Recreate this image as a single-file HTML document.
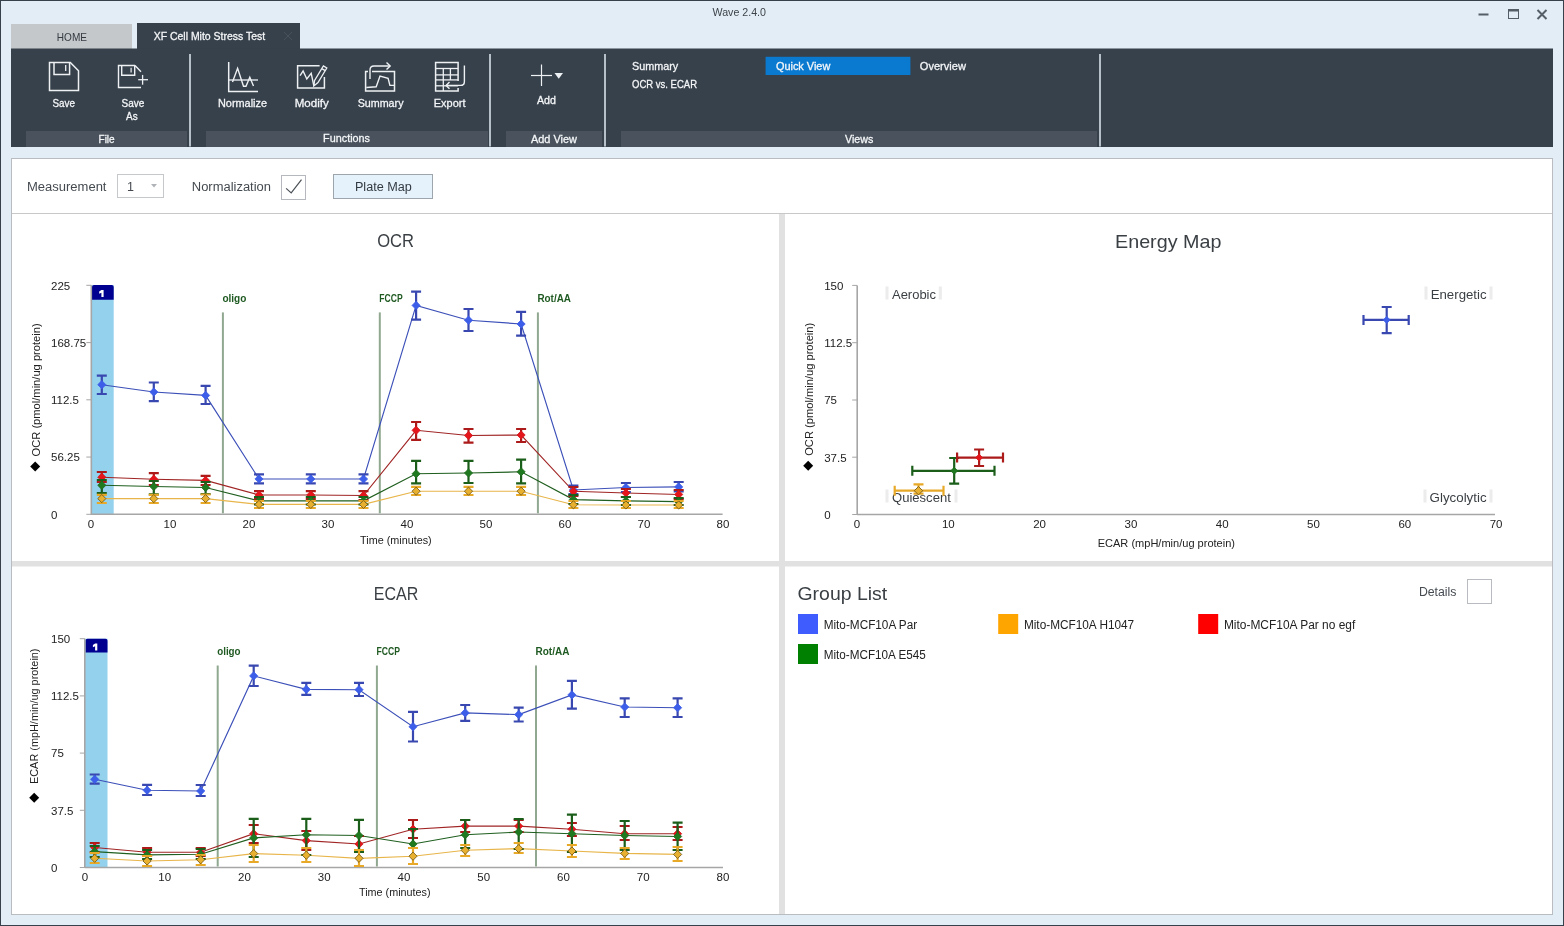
<!DOCTYPE html>
<html><head><meta charset="utf-8"><title>Wave 2.4.0</title>
<style>
html,body{margin:0;padding:0;}
body{width:1564px;height:926px;overflow:hidden;background:#e2edf5;font-family:"Liberation Sans", sans-serif;position:relative;}
.frame{position:absolute;left:0;top:0;width:1562px;height:924px;border:1px solid #36414b;}
svg{position:absolute;left:0;top:0;will-change:transform;}
svg text{font-family:"Liberation Sans", sans-serif;}
</style></head><body>
<div class="frame"></div>
<svg width="1564" height="926" viewBox="0 0 1564 926">
<defs><filter id="blur1" x="-2" y="-1" width="5" height="3"><feGaussianBlur stdDeviation="0.7"/></filter></defs>
<text x="712.5" y="16" font-size="11" fill="#3e4349" text-anchor="start" font-weight="normal" textLength="53.5" lengthAdjust="spacingAndGlyphs">Wave 2.4.0</text>
<line x1="1478.5" y1="14.5" x2="1488.5" y2="14.5" stroke="#555d66" stroke-width="2"/>
<rect x="1508.5" y="9.5" width="10" height="9" fill="none" stroke="#555d66" stroke-width="1"/>
<line x1="1508.5" y1="10.5" x2="1518.5" y2="10.5" stroke="#555d66" stroke-width="2"/>
<path d="M1537.5 10 L1546.5 19 M1546.5 10 L1537.5 19" stroke="#555d66" stroke-width="2" fill="none"/>
<rect x="11" y="24" width="121" height="25" fill="#c4c8cb"/>
<text x="56.8" y="41" font-size="11" fill="#333a40" text-anchor="start" font-weight="normal" textLength="30.2" lengthAdjust="spacingAndGlyphs">HOME</text>
<rect x="137" y="23" width="163" height="26" fill="#37414b"/>
<text x="153.7" y="40" font-size="11" fill="#f2f4f6" text-anchor="start" font-weight="normal" textLength="111.4" lengthAdjust="spacingAndGlyphs" stroke="#f4f6f8" stroke-width="0.3">XF Cell Mito Stress Test</text>
<path d="M284 32 L292 40 M292 32 L284 40" stroke="#48525c" stroke-width="1" fill="none"/>
<rect x="11" y="48.5" width="1542" height="98.5" fill="#37414b"/>
<rect x="26" y="131" width="161" height="16" fill="#4a535d"/>
<rect x="206" y="131" width="282" height="16" fill="#4a535d"/>
<rect x="506" y="131" width="96" height="16" fill="#4a535d"/>
<rect x="621" y="131" width="476" height="16" fill="#4a535d"/>
<rect x="189" y="54" width="2" height="92.5" fill="#b6c0c9"/>
<rect x="489" y="54" width="2" height="92.5" fill="#b6c0c9"/>
<rect x="604" y="54" width="2" height="92.5" fill="#b6c0c9"/>
<rect x="1099" y="54" width="2" height="92.5" fill="#b6c0c9"/>
<text x="52.5" y="107" font-size="11.5" fill="#f4f6f8" text-anchor="start" font-weight="normal" textLength="22.5" lengthAdjust="spacingAndGlyphs" stroke="#f4f6f8" stroke-width="0.3">Save</text>
<text x="121.5" y="107" font-size="11.5" fill="#f4f6f8" text-anchor="start" font-weight="normal" textLength="22.8" lengthAdjust="spacingAndGlyphs" stroke="#f4f6f8" stroke-width="0.3">Save</text>
<text x="126" y="119.7" font-size="11.5" fill="#f4f6f8" text-anchor="start" font-weight="normal" textLength="11.6" lengthAdjust="spacingAndGlyphs" stroke="#f4f6f8" stroke-width="0.3">As</text>
<text x="98.5" y="142.8" font-size="11.5" fill="#f4f6f8" text-anchor="start" font-weight="normal" textLength="16.2" lengthAdjust="spacingAndGlyphs" stroke="#f4f6f8" stroke-width="0.3">File</text>
<text x="218" y="106.5" font-size="11.5" fill="#f4f6f8" text-anchor="start" font-weight="normal" textLength="49" lengthAdjust="spacingAndGlyphs" stroke="#f4f6f8" stroke-width="0.3">Normalize</text>
<text x="294.7" y="106.5" font-size="11.5" fill="#f4f6f8" text-anchor="start" font-weight="normal" textLength="34" lengthAdjust="spacingAndGlyphs" stroke="#f4f6f8" stroke-width="0.3">Modify</text>
<text x="357.7" y="106.5" font-size="11.5" fill="#f4f6f8" text-anchor="start" font-weight="normal" textLength="45.8" lengthAdjust="spacingAndGlyphs" stroke="#f4f6f8" stroke-width="0.3">Summary</text>
<text x="433.8" y="106.5" font-size="11.5" fill="#f4f6f8" text-anchor="start" font-weight="normal" textLength="31.7" lengthAdjust="spacingAndGlyphs" stroke="#f4f6f8" stroke-width="0.3">Export</text>
<text x="323.1" y="142.4" font-size="11.5" fill="#f4f6f8" text-anchor="start" font-weight="normal" textLength="46.9" lengthAdjust="spacingAndGlyphs" stroke="#f4f6f8" stroke-width="0.3">Functions</text>
<text x="537" y="103.6" font-size="11.5" fill="#f4f6f8" text-anchor="start" font-weight="normal" textLength="19" lengthAdjust="spacingAndGlyphs" stroke="#f4f6f8" stroke-width="0.3">Add</text>
<text x="531" y="142.6" font-size="11.5" fill="#f4f6f8" text-anchor="start" font-weight="normal" textLength="46" lengthAdjust="spacingAndGlyphs" stroke="#f4f6f8" stroke-width="0.3">Add View</text>
<text x="632" y="69.7" font-size="11.5" fill="#f4f6f8" text-anchor="start" font-weight="normal" textLength="46.2" lengthAdjust="spacingAndGlyphs" stroke="#f4f6f8" stroke-width="0.3">Summary</text>
<text x="632" y="87.6" font-size="11.5" fill="#f4f6f8" text-anchor="start" font-weight="normal" textLength="65" lengthAdjust="spacingAndGlyphs" stroke="#f4f6f8" stroke-width="0.3">OCR vs. ECAR</text>
<rect x="765.6" y="56.8" width="144.8" height="18.2" fill="#0a7ad0"/>
<text x="775.9" y="70" font-size="11.5" fill="#f4f6f8" text-anchor="start" font-weight="normal" textLength="54.4" lengthAdjust="spacingAndGlyphs" stroke="#f4f6f8" stroke-width="0.3">Quick View</text>
<text x="919.8" y="70" font-size="11.5" fill="#f4f6f8" text-anchor="start" font-weight="normal" textLength="46.1" lengthAdjust="spacingAndGlyphs" stroke="#f4f6f8" stroke-width="0.3">Overview</text>
<text x="845" y="142.5" font-size="11.5" fill="#f4f6f8" text-anchor="start" font-weight="normal" textLength="28.3" lengthAdjust="spacingAndGlyphs" stroke="#f4f6f8" stroke-width="0.3">Views</text>
<path d="M49.5 62.5 H70.3 L78.5 70.7 V90.5 H49.5 Z" stroke="#eef1f4" stroke-width="1.5" fill="none"/>
<path d="M54 62.5 V74.5 H69.6 V62.5" stroke="#eef1f4" stroke-width="1.5" fill="none"/>
<line x1="65.7" y1="65" x2="65.7" y2="71" stroke="#eef1f4" stroke-width="1.3"/>
<path d="M135 65.5 L141 71.7 M135 65.5 H118.5 V87.5 H141" stroke="#eef1f4" stroke-width="1.4" fill="none"/>
<path d="M121.7 65.5 V75.2 H134.7 V65.5" stroke="#eef1f4" stroke-width="1.4" fill="none"/>
<line x1="131.1" y1="67.8" x2="131.1" y2="72.4" stroke="#eef1f4" stroke-width="1.2"/>
<line x1="138.2" y1="79.7" x2="148" y2="79.7" stroke="#eef1f4" stroke-width="1.3"/>
<line x1="142.6" y1="74.9" x2="142.6" y2="84.7" stroke="#eef1f4" stroke-width="1.3"/>
<path d="M228.7 62 V91.5 H258" stroke="#eef1f4" stroke-width="1.5" fill="none"/>
<path d="M228.7 80 H258" stroke="#eef1f4" stroke-width="1.3" fill="none"/>
<path d="M232.5 81.9 L237.6 68.3 L243.5 86.3 H246 L249.8 77.3 L253.5 86" stroke="#eef1f4" stroke-width="1.4" fill="none"/>
<path d="M319.6 65.7 H297.6 V88.1 H324.4 V77.1" stroke="#eef1f4" stroke-width="1.5" fill="none"/>
<path d="M300.1 75.6 L303.1 70.9 L306.8 79 L311.2 73.4 L313.8 85.6" stroke="#eef1f4" stroke-width="1.4" fill="none"/>
<path d="M313.8 86 L314.6 80.5 L323.4 66 L326.8 68 L318 82.6 Z M321.8 68.6 L325.2 70.6" stroke="#eef1f4" stroke-width="1.3" fill="none"/>
<path d="M368 71.4 H365.6 V91 H394.5 V71.4 H372" stroke="#eef1f4" stroke-width="1.5" fill="none"/>
<path d="M370 79 V70 Q370 66 374 66 H390" stroke="#eef1f4" stroke-width="1.4" fill="none"/>
<path d="M386.5 62.6 L390.2 66 L386.5 69.6" stroke="#eef1f4" stroke-width="1.4" fill="none"/>
<path d="M366.3 87.5 L376.2 86.8 L380 76 L388.1 78.4 L389.9 85.4 H394.5" stroke="#eef1f4" stroke-width="1.4" fill="none"/>
<path d="M458.1 81 V62.4 H435.6 V91 H458.1 V88" stroke="#eef1f4" stroke-width="1.5" fill="none"/>
<line x1="435.6" y1="68.5" x2="458.1" y2="68.5" stroke="#eef1f4" stroke-width="1.3"/>
<line x1="435.6" y1="74.9" x2="458.1" y2="74.9" stroke="#eef1f4" stroke-width="1.3"/>
<line x1="435.6" y1="79.9" x2="458.1" y2="79.9" stroke="#eef1f4" stroke-width="1.3"/>
<line x1="435.6" y1="85.8" x2="458.1" y2="85.8" stroke="#eef1f4" stroke-width="1.3"/>
<line x1="443.3" y1="68.5" x2="443.3" y2="91" stroke="#eef1f4" stroke-width="1.3"/>
<line x1="450.4" y1="68.5" x2="450.4" y2="79.9" stroke="#eef1f4" stroke-width="1.3"/>
<path d="M464.4 65.4 V81.4 Q464.4 85.4 460.4 85.4 H446.1" stroke="#eef1f4" stroke-width="1.4" fill="none"/>
<path d="M449.5 82 L446.1 85.4 L449.5 88.8" stroke="#eef1f4" stroke-width="1.4" fill="none"/>
<line x1="531" y1="75.5" x2="552" y2="75.5" stroke="#eef1f4" stroke-width="1.2"/>
<line x1="541.5" y1="64.5" x2="541.5" y2="86" stroke="#eef1f4" stroke-width="1.2"/>
<path d="M554.5 73 H563 L558.75 78.7 Z" stroke="none" stroke-width="0" fill="#eef1f4"/>
<rect x="11.5" y="158.5" width="1541" height="756" fill="#ffffff" stroke="#b9bdc1" stroke-width="1"/>
<line x1="12" y1="213.5" x2="1552" y2="213.5" stroke="#c8c8c8" stroke-width="1"/>
<text x="27" y="191" font-size="12.5" fill="#444a50" text-anchor="start" font-weight="normal" textLength="79.5" lengthAdjust="spacingAndGlyphs">Measurement</text>
<rect x="117.5" y="174.5" width="46" height="23" fill="#fff" stroke="#c6c9cc" stroke-width="1"/>
<text x="127" y="191" font-size="12.5" fill="#444a50" text-anchor="start" font-weight="normal">1</text>
<path d="M151 184 H157 L154 187.5 Z" stroke="none" stroke-width="0" fill="#b0b4b8"/>
<text x="191.8" y="191" font-size="12.5" fill="#444a50" text-anchor="start" font-weight="normal" textLength="79.2" lengthAdjust="spacingAndGlyphs">Normalization</text>
<rect x="281.5" y="175.5" width="24" height="24" fill="#fff" stroke="#b5b9bd" stroke-width="1"/>
<path d="M286.1 188.4 L291.2 192.9 L301.5 179.7" stroke="#4a5056" stroke-width="1.2" fill="none"/>
<rect x="333.5" y="174.5" width="99" height="24" fill="#e5f1fb" stroke="#9ea6ad" stroke-width="1"/>
<text x="354.9" y="191" font-size="12.5" fill="#333a40" text-anchor="start" font-weight="normal" textLength="56.9" lengthAdjust="spacingAndGlyphs">Plate Map</text>
<rect x="779" y="214" width="6" height="700" fill="#e1e1e1"/>
<rect x="12" y="561" width="1540" height="5.5" fill="#e1e1e1"/>
<rect x="91.3" y="285.2" width="22.400000000000006" height="229.09999999999997" fill="#94d1ec"/>
<path d="M92 299.7 V287 Q92 285 94 285 H111.7 Q113.7 285 113.7 287 V299.7 Z" fill="#000090"/>
<path d="M101.4 290 H103.6 V297 H101.4 V292.7 L99.2 293.7 V291.5 Z" stroke="none" stroke-width="0" fill="#fff"/>
<line x1="91.3" y1="285.3" x2="91.3" y2="514.8" stroke="#a6a6a6" stroke-width="1.6"/>
<line x1="91.3" y1="514.3" x2="722.6" y2="514.3" stroke="#a6a6a6" stroke-width="1.6"/>
<line x1="86.3" y1="285.3" x2="91.3" y2="285.3" stroke="#a6a6a6" stroke-width="1"/>
<text x="51" y="289.6" font-size="11.5" fill="#222" text-anchor="start" font-weight="normal">225</text>
<line x1="86.3" y1="342.6" x2="91.3" y2="342.6" stroke="#a6a6a6" stroke-width="1"/>
<text x="51" y="346.90000000000003" font-size="11.5" fill="#222" text-anchor="start" font-weight="normal">168.75</text>
<line x1="86.3" y1="399.8" x2="91.3" y2="399.8" stroke="#a6a6a6" stroke-width="1"/>
<text x="51" y="404.1" font-size="11.5" fill="#222" text-anchor="start" font-weight="normal">112.5</text>
<line x1="86.3" y1="457.05" x2="91.3" y2="457.05" stroke="#a6a6a6" stroke-width="1"/>
<text x="51" y="461.35" font-size="11.5" fill="#222" text-anchor="start" font-weight="normal">56.25</text>
<line x1="86.3" y1="514.3" x2="91.3" y2="514.3" stroke="#a6a6a6" stroke-width="1"/>
<text x="51" y="518.5999999999999" font-size="11.5" fill="#222" text-anchor="start" font-weight="normal">0</text>
<text x="91" y="527.7" font-size="11.5" fill="#222" text-anchor="middle" font-weight="normal">0</text>
<text x="170" y="527.7" font-size="11.5" fill="#222" text-anchor="middle" font-weight="normal">10</text>
<text x="249" y="527.7" font-size="11.5" fill="#222" text-anchor="middle" font-weight="normal">20</text>
<text x="328" y="527.7" font-size="11.5" fill="#222" text-anchor="middle" font-weight="normal">30</text>
<text x="407" y="527.7" font-size="11.5" fill="#222" text-anchor="middle" font-weight="normal">40</text>
<text x="486" y="527.7" font-size="11.5" fill="#222" text-anchor="middle" font-weight="normal">50</text>
<text x="565" y="527.7" font-size="11.5" fill="#222" text-anchor="middle" font-weight="normal">60</text>
<text x="644" y="527.7" font-size="11.5" fill="#222" text-anchor="middle" font-weight="normal">70</text>
<text x="723" y="527.7" font-size="11.5" fill="#222" text-anchor="middle" font-weight="normal">80</text>
<line x1="222.9" y1="312.4" x2="222.9" y2="513.3" stroke="#8fa88f" stroke-width="2"/>
<text x="222.4" y="302" font-size="10" fill="#1f5a22" text-anchor="start" font-weight="bold" textLength="24" lengthAdjust="spacingAndGlyphs">oligo</text>
<line x1="379.8" y1="312.4" x2="379.8" y2="513.3" stroke="#8fa88f" stroke-width="2"/>
<text x="379.3" y="302" font-size="10" fill="#1f5a22" text-anchor="start" font-weight="bold" textLength="23.4" lengthAdjust="spacingAndGlyphs">FCCP</text>
<line x1="537.9" y1="312.4" x2="537.9" y2="513.3" stroke="#8fa88f" stroke-width="2"/>
<text x="537.4" y="302" font-size="10" fill="#1f5a22" text-anchor="start" font-weight="bold" textLength="33.6" lengthAdjust="spacingAndGlyphs">Rot/AA</text>
<text x="377.2" y="247" font-size="19" fill="#3a3f44" text-anchor="start" font-weight="normal" textLength="36.8" lengthAdjust="spacingAndGlyphs">OCR</text>
<text x="360.1" y="543.8" font-size="11" fill="#222" text-anchor="start" font-weight="normal" textLength="71.6" lengthAdjust="spacingAndGlyphs">Time (minutes)</text>
<text x="40" y="389.9" font-size="11" fill="#222" text-anchor="middle" transform="rotate(-90 40 389.9)" textLength="133.2" lengthAdjust="spacingAndGlyphs">OCR (pmol/min/ug protein)</text>
<path d="M35.2 461.6 L40.2 466.6 L35.2 471.6 L30.200000000000003 466.6 Z" fill="#000"/>
<polyline points="101.8,384.7 153.8,392 205.6,395.4 259,479 310.8,479 363.5,479 416.1,305.4 468.5,320.2 521.1,324 573.4,490 625.9,487.5 678.7,486.9" fill="none" stroke="#3b4fb8" stroke-width="1.15"/>
<polyline points="101.8,477.2 153.8,479.2 205.6,480.4 259,495 310.8,495 363.5,495.5 416.1,430.3 468.5,435.5 521.1,435 573.4,491.3 625.9,493 678.7,494.5" fill="none" stroke="#a02424" stroke-width="1.15"/>
<polyline points="101.8,485.3 153.8,486.5 205.6,487.5 259,500.8 310.8,500.8 363.5,500.8 416.1,473.8 468.5,473 521.1,471.8 573.4,499.6 625.9,500.9 678.7,501.6" fill="none" stroke="#1f5f1f" stroke-width="1.15"/>
<polyline points="101.8,498.6 153.8,498.6 205.6,498.6 259,504.4 310.8,504.4 363.5,504.4 416.1,491.2 468.5,491.2 521.1,491.2 573.4,504.8 625.9,505 678.7,505" fill="none" stroke="#e8b54a" stroke-width="1.15"/>
<path d="M96.8 375.6 H106.8 M101.8 375.6 V394 M96.8 394 H106.8" stroke="#3848b0" stroke-width="2.2" fill="none"/>
<path d="M148.8 382.5 H158.8 M153.8 382.5 V401.1 M148.8 401.1 H158.8" stroke="#3848b0" stroke-width="2.2" fill="none"/>
<path d="M200.6 385.9 H210.6 M205.6 385.9 V404 M200.6 404 H210.6" stroke="#3848b0" stroke-width="2.2" fill="none"/>
<path d="M254 474.4 H264 M259 474.4 V483.4 M254 483.4 H264" stroke="#3848b0" stroke-width="2.2" fill="none"/>
<path d="M305.8 474.4 H315.8 M310.8 474.4 V483.4 M305.8 483.4 H315.8" stroke="#3848b0" stroke-width="2.2" fill="none"/>
<path d="M358.5 474.4 H368.5 M363.5 474.4 V483.4 M358.5 483.4 H368.5" stroke="#3848b0" stroke-width="2.2" fill="none"/>
<path d="M411.1 291.7 H421.1 M416.1 291.7 V319.6 M411.1 319.6 H421.1" stroke="#3848b0" stroke-width="2.2" fill="none"/>
<path d="M463.5 309 H473.5 M468.5 309 V331 M463.5 331 H473.5" stroke="#3848b0" stroke-width="2.2" fill="none"/>
<path d="M516.1 311.9 H526.1 M521.1 311.9 V335.7 M516.1 335.7 H526.1" stroke="#3848b0" stroke-width="2.2" fill="none"/>
<path d="M568.4 485.6 H578.4 M573.4 485.6 V494 M568.4 494 H578.4" stroke="#3848b0" stroke-width="2.2" fill="none"/>
<path d="M620.9 483 H630.9 M625.9 483 V492 M620.9 492 H630.9" stroke="#3848b0" stroke-width="2.2" fill="none"/>
<path d="M673.7 482 H683.7 M678.7 482 V491.5 M673.7 491.5 H683.7" stroke="#3848b0" stroke-width="2.2" fill="none"/>
<path d="M101.8 380.59999999999997 L105.89999999999999 384.7 L101.8 388.8 L97.7 384.7 Z" fill="#3d5ee8" stroke="#3d5ee8" stroke-width="0.8"/>
<path d="M153.8 387.9 L157.9 392 L153.8 396.1 L149.70000000000002 392 Z" fill="#3d5ee8" stroke="#3d5ee8" stroke-width="0.8"/>
<path d="M205.6 391.29999999999995 L209.7 395.4 L205.6 399.5 L201.5 395.4 Z" fill="#3d5ee8" stroke="#3d5ee8" stroke-width="0.8"/>
<path d="M259 474.9 L263.1 479 L259 483.1 L254.9 479 Z" fill="#3d5ee8" stroke="#3d5ee8" stroke-width="0.8"/>
<path d="M310.8 474.9 L314.90000000000003 479 L310.8 483.1 L306.7 479 Z" fill="#3d5ee8" stroke="#3d5ee8" stroke-width="0.8"/>
<path d="M363.5 474.9 L367.6 479 L363.5 483.1 L359.4 479 Z" fill="#3d5ee8" stroke="#3d5ee8" stroke-width="0.8"/>
<path d="M416.1 301.29999999999995 L420.20000000000005 305.4 L416.1 309.5 L412.0 305.4 Z" fill="#3d5ee8" stroke="#3d5ee8" stroke-width="0.8"/>
<path d="M468.5 316.09999999999997 L472.6 320.2 L468.5 324.3 L464.4 320.2 Z" fill="#3d5ee8" stroke="#3d5ee8" stroke-width="0.8"/>
<path d="M521.1 319.9 L525.2 324 L521.1 328.1 L517.0 324 Z" fill="#3d5ee8" stroke="#3d5ee8" stroke-width="0.8"/>
<path d="M573.4 485.9 L577.5 490 L573.4 494.1 L569.3 490 Z" fill="#3d5ee8" stroke="#3d5ee8" stroke-width="0.8"/>
<path d="M625.9 483.4 L630.0 487.5 L625.9 491.6 L621.8 487.5 Z" fill="#3d5ee8" stroke="#3d5ee8" stroke-width="0.8"/>
<path d="M678.7 482.79999999999995 L682.8000000000001 486.9 L678.7 491.0 L674.6 486.9 Z" fill="#3d5ee8" stroke="#3d5ee8" stroke-width="0.8"/>
<path d="M96.8 472 H106.8 M101.8 472 V482 M96.8 482 H106.8" stroke="#ac1a1a" stroke-width="2.2" fill="none"/>
<path d="M148.8 473.2 H158.8 M153.8 473.2 V485 M148.8 485 H158.8" stroke="#ac1a1a" stroke-width="2.2" fill="none"/>
<path d="M200.6 475.8 H210.6 M205.6 475.8 V485 M200.6 485 H210.6" stroke="#ac1a1a" stroke-width="2.2" fill="none"/>
<path d="M254 491.2 H264 M259 491.2 V499 M254 499 H264" stroke="#ac1a1a" stroke-width="2.2" fill="none"/>
<path d="M305.8 491.2 H315.8 M310.8 491.2 V499 M305.8 499 H315.8" stroke="#ac1a1a" stroke-width="2.2" fill="none"/>
<path d="M358.5 491.2 H368.5 M363.5 491.2 V500 M358.5 500 H368.5" stroke="#ac1a1a" stroke-width="2.2" fill="none"/>
<path d="M411.1 422 H421.1 M416.1 422 V439.9 M411.1 439.9 H421.1" stroke="#ac1a1a" stroke-width="2.2" fill="none"/>
<path d="M463.5 429 H473.5 M468.5 429 V442.7 M463.5 442.7 H473.5" stroke="#ac1a1a" stroke-width="2.2" fill="none"/>
<path d="M516.1 429 H526.1 M521.1 429 V442 M516.1 442 H526.1" stroke="#ac1a1a" stroke-width="2.2" fill="none"/>
<path d="M568.4 487 H578.4 M573.4 487 V496 M568.4 496 H578.4" stroke="#ac1a1a" stroke-width="2.2" fill="none"/>
<path d="M620.9 489 H630.9 M625.9 489 V497 M620.9 497 H630.9" stroke="#ac1a1a" stroke-width="2.2" fill="none"/>
<path d="M673.7 490 H683.7 M678.7 490 V499 M673.7 499 H683.7" stroke="#ac1a1a" stroke-width="2.2" fill="none"/>
<path d="M101.8 473.09999999999997 L105.89999999999999 477.2 L101.8 481.3 L97.7 477.2 Z" fill="#e4161c" stroke="#d4161c" stroke-width="0.8"/>
<path d="M153.8 475.09999999999997 L157.9 479.2 L153.8 483.3 L149.70000000000002 479.2 Z" fill="#e4161c" stroke="#d4161c" stroke-width="0.8"/>
<path d="M205.6 476.29999999999995 L209.7 480.4 L205.6 484.5 L201.5 480.4 Z" fill="#e4161c" stroke="#d4161c" stroke-width="0.8"/>
<path d="M259 490.9 L263.1 495 L259 499.1 L254.9 495 Z" fill="#e4161c" stroke="#d4161c" stroke-width="0.8"/>
<path d="M310.8 490.9 L314.90000000000003 495 L310.8 499.1 L306.7 495 Z" fill="#e4161c" stroke="#d4161c" stroke-width="0.8"/>
<path d="M363.5 491.4 L367.6 495.5 L363.5 499.6 L359.4 495.5 Z" fill="#e4161c" stroke="#d4161c" stroke-width="0.8"/>
<path d="M416.1 426.2 L420.20000000000005 430.3 L416.1 434.40000000000003 L412.0 430.3 Z" fill="#e4161c" stroke="#d4161c" stroke-width="0.8"/>
<path d="M468.5 431.4 L472.6 435.5 L468.5 439.6 L464.4 435.5 Z" fill="#e4161c" stroke="#d4161c" stroke-width="0.8"/>
<path d="M521.1 430.9 L525.2 435 L521.1 439.1 L517.0 435 Z" fill="#e4161c" stroke="#d4161c" stroke-width="0.8"/>
<path d="M573.4 487.2 L577.5 491.3 L573.4 495.40000000000003 L569.3 491.3 Z" fill="#e4161c" stroke="#d4161c" stroke-width="0.8"/>
<path d="M625.9 488.9 L630.0 493 L625.9 497.1 L621.8 493 Z" fill="#e4161c" stroke="#d4161c" stroke-width="0.8"/>
<path d="M678.7 490.4 L682.8000000000001 494.5 L678.7 498.6 L674.6 494.5 Z" fill="#e4161c" stroke="#d4161c" stroke-width="0.8"/>
<path d="M96.8 480 H106.8 M101.8 480 V493 M96.8 493 H106.8" stroke="#1a5e1a" stroke-width="2.2" fill="none"/>
<path d="M148.8 481 H158.8 M153.8 481 V494.4 M148.8 494.4 H158.8" stroke="#1a5e1a" stroke-width="2.2" fill="none"/>
<path d="M200.6 482 H210.6 M205.6 482 V494 M200.6 494 H210.6" stroke="#1a5e1a" stroke-width="2.2" fill="none"/>
<path d="M254 497 H264 M259 497 V504.5 M254 504.5 H264" stroke="#1a5e1a" stroke-width="2.2" fill="none"/>
<path d="M305.8 497 H315.8 M310.8 497 V504.5 M305.8 504.5 H315.8" stroke="#1a5e1a" stroke-width="2.2" fill="none"/>
<path d="M358.5 497 H368.5 M363.5 497 V504.5 M358.5 504.5 H368.5" stroke="#1a5e1a" stroke-width="2.2" fill="none"/>
<path d="M411.1 460.9 H421.1 M416.1 460.9 V483.4 M411.1 483.4 H421.1" stroke="#1a5e1a" stroke-width="2.2" fill="none"/>
<path d="M463.5 460.9 H473.5 M468.5 460.9 V483 M463.5 483 H473.5" stroke="#1a5e1a" stroke-width="2.2" fill="none"/>
<path d="M516.1 459.6 H526.1 M521.1 459.6 V483.4 M516.1 483.4 H526.1" stroke="#1a5e1a" stroke-width="2.2" fill="none"/>
<path d="M568.4 495 H578.4 M573.4 495 V504 M568.4 504 H578.4" stroke="#1a5e1a" stroke-width="2.2" fill="none"/>
<path d="M620.9 497 H630.9 M625.9 497 V505 M620.9 505 H630.9" stroke="#1a5e1a" stroke-width="2.2" fill="none"/>
<path d="M673.7 498 H683.7 M678.7 498 V505 M673.7 505 H683.7" stroke="#1a5e1a" stroke-width="2.2" fill="none"/>
<path d="M101.8 481.2 L105.89999999999999 485.3 L101.8 489.40000000000003 L97.7 485.3 Z" fill="#1f7a1f" stroke="#1f6a1f" stroke-width="0.8"/>
<path d="M153.8 482.4 L157.9 486.5 L153.8 490.6 L149.70000000000002 486.5 Z" fill="#1f7a1f" stroke="#1f6a1f" stroke-width="0.8"/>
<path d="M205.6 483.4 L209.7 487.5 L205.6 491.6 L201.5 487.5 Z" fill="#1f7a1f" stroke="#1f6a1f" stroke-width="0.8"/>
<path d="M259 496.7 L263.1 500.8 L259 504.90000000000003 L254.9 500.8 Z" fill="#1f7a1f" stroke="#1f6a1f" stroke-width="0.8"/>
<path d="M310.8 496.7 L314.90000000000003 500.8 L310.8 504.90000000000003 L306.7 500.8 Z" fill="#1f7a1f" stroke="#1f6a1f" stroke-width="0.8"/>
<path d="M363.5 496.7 L367.6 500.8 L363.5 504.90000000000003 L359.4 500.8 Z" fill="#1f7a1f" stroke="#1f6a1f" stroke-width="0.8"/>
<path d="M416.1 469.7 L420.20000000000005 473.8 L416.1 477.90000000000003 L412.0 473.8 Z" fill="#1f7a1f" stroke="#1f6a1f" stroke-width="0.8"/>
<path d="M468.5 468.9 L472.6 473 L468.5 477.1 L464.4 473 Z" fill="#1f7a1f" stroke="#1f6a1f" stroke-width="0.8"/>
<path d="M521.1 467.7 L525.2 471.8 L521.1 475.90000000000003 L517.0 471.8 Z" fill="#1f7a1f" stroke="#1f6a1f" stroke-width="0.8"/>
<path d="M573.4 495.5 L577.5 499.6 L573.4 503.70000000000005 L569.3 499.6 Z" fill="#1f7a1f" stroke="#1f6a1f" stroke-width="0.8"/>
<path d="M625.9 496.79999999999995 L630.0 500.9 L625.9 505.0 L621.8 500.9 Z" fill="#1f7a1f" stroke="#1f6a1f" stroke-width="0.8"/>
<path d="M678.7 497.5 L682.8000000000001 501.6 L678.7 505.70000000000005 L674.6 501.6 Z" fill="#1f7a1f" stroke="#1f6a1f" stroke-width="0.8"/>
<path d="M96.8 494.8 H106.8 M101.8 494.8 V503 M96.8 503 H106.8" stroke="#e8a928" stroke-width="2.2" fill="none"/>
<path d="M148.8 494.8 H158.8 M153.8 494.8 V503 M148.8 503 H158.8" stroke="#e8a928" stroke-width="2.2" fill="none"/>
<path d="M200.6 494.5 H210.6 M205.6 494.5 V503 M200.6 503 H210.6" stroke="#e8a928" stroke-width="2.2" fill="none"/>
<path d="M254 501 H264 M259 501 V508 M254 508 H264" stroke="#e8a928" stroke-width="2.2" fill="none"/>
<path d="M305.8 501 H315.8 M310.8 501 V508 M305.8 508 H315.8" stroke="#e8a928" stroke-width="2.2" fill="none"/>
<path d="M358.5 501 H368.5 M363.5 501 V508 M358.5 508 H368.5" stroke="#e8a928" stroke-width="2.2" fill="none"/>
<path d="M411.1 486.8 H421.1 M416.1 486.8 V495 M411.1 495 H421.1" stroke="#e8a928" stroke-width="2.2" fill="none"/>
<path d="M463.5 486.8 H473.5 M468.5 486.8 V495 M463.5 495 H473.5" stroke="#e8a928" stroke-width="2.2" fill="none"/>
<path d="M516.1 486.8 H526.1 M521.1 486.8 V495 M516.1 495 H526.1" stroke="#e8a928" stroke-width="2.2" fill="none"/>
<path d="M568.4 501 H578.4 M573.4 501 V508 M568.4 508 H578.4" stroke="#e8a928" stroke-width="2.2" fill="none"/>
<path d="M620.9 501 H630.9 M625.9 501 V508 M620.9 508 H630.9" stroke="#e8a928" stroke-width="2.2" fill="none"/>
<path d="M673.7 501 H683.7 M678.7 501 V508 M673.7 508 H683.7" stroke="#e8a928" stroke-width="2.2" fill="none"/>
<path d="M101.8 494.5 L105.89999999999999 498.6 L101.8 502.70000000000005 L97.7 498.6 Z" fill="#e8b030" stroke="#6a5010" stroke-width="0.8"/>
<path d="M153.8 494.5 L157.9 498.6 L153.8 502.70000000000005 L149.70000000000002 498.6 Z" fill="#e8b030" stroke="#6a5010" stroke-width="0.8"/>
<path d="M205.6 494.5 L209.7 498.6 L205.6 502.70000000000005 L201.5 498.6 Z" fill="#e8b030" stroke="#6a5010" stroke-width="0.8"/>
<path d="M259 500.29999999999995 L263.1 504.4 L259 508.5 L254.9 504.4 Z" fill="#e8b030" stroke="#6a5010" stroke-width="0.8"/>
<path d="M310.8 500.29999999999995 L314.90000000000003 504.4 L310.8 508.5 L306.7 504.4 Z" fill="#e8b030" stroke="#6a5010" stroke-width="0.8"/>
<path d="M363.5 500.29999999999995 L367.6 504.4 L363.5 508.5 L359.4 504.4 Z" fill="#e8b030" stroke="#6a5010" stroke-width="0.8"/>
<path d="M416.1 487.09999999999997 L420.20000000000005 491.2 L416.1 495.3 L412.0 491.2 Z" fill="#e8b030" stroke="#6a5010" stroke-width="0.8"/>
<path d="M468.5 487.09999999999997 L472.6 491.2 L468.5 495.3 L464.4 491.2 Z" fill="#e8b030" stroke="#6a5010" stroke-width="0.8"/>
<path d="M521.1 487.09999999999997 L525.2 491.2 L521.1 495.3 L517.0 491.2 Z" fill="#e8b030" stroke="#6a5010" stroke-width="0.8"/>
<path d="M573.4 500.7 L577.5 504.8 L573.4 508.90000000000003 L569.3 504.8 Z" fill="#e8b030" stroke="#6a5010" stroke-width="0.8"/>
<path d="M625.9 500.9 L630.0 505 L625.9 509.1 L621.8 505 Z" fill="#e8b030" stroke="#6a5010" stroke-width="0.8"/>
<path d="M678.7 500.9 L682.8000000000001 505 L678.7 509.1 L674.6 505 Z" fill="#e8b030" stroke="#6a5010" stroke-width="0.8"/>
<rect x="84.8" y="638.7" width="22.700000000000003" height="228.79999999999995" fill="#94d1ec"/>
<path d="M85.5 652.6 V640.7 Q85.5 638.7 87.5 638.7 H105.5 Q107.5 638.7 107.5 640.7 V652.6 Z" fill="#000090"/>
<path d="M95.1 643.5 H97.3 V650.5 H95.1 V646.2 L92.9 647.2 V645 Z" stroke="none" stroke-width="0" fill="#fff"/>
<line x1="84.8" y1="638.7" x2="84.8" y2="868.0" stroke="#a6a6a6" stroke-width="1.6"/>
<line x1="84.8" y1="867.5" x2="723" y2="867.5" stroke="#a6a6a6" stroke-width="1.6"/>
<line x1="79.8" y1="638.7" x2="84.8" y2="638.7" stroke="#a6a6a6" stroke-width="1"/>
<text x="51" y="643.0" font-size="11.5" fill="#222" text-anchor="start" font-weight="normal">150</text>
<line x1="79.8" y1="695.9" x2="84.8" y2="695.9" stroke="#a6a6a6" stroke-width="1"/>
<text x="51" y="700.1999999999999" font-size="11.5" fill="#222" text-anchor="start" font-weight="normal">112.5</text>
<line x1="79.8" y1="753.1" x2="84.8" y2="753.1" stroke="#a6a6a6" stroke-width="1"/>
<text x="51" y="757.4" font-size="11.5" fill="#222" text-anchor="start" font-weight="normal">75</text>
<line x1="79.8" y1="810.3" x2="84.8" y2="810.3" stroke="#a6a6a6" stroke-width="1"/>
<text x="51" y="814.5999999999999" font-size="11.5" fill="#222" text-anchor="start" font-weight="normal">37.5</text>
<line x1="79.8" y1="867.5" x2="84.8" y2="867.5" stroke="#a6a6a6" stroke-width="1"/>
<text x="51" y="871.8" font-size="11.5" fill="#222" text-anchor="start" font-weight="normal">0</text>
<text x="85.0" y="880.9" font-size="11.5" fill="#222" text-anchor="middle" font-weight="normal">0</text>
<text x="164.75" y="880.9" font-size="11.5" fill="#222" text-anchor="middle" font-weight="normal">10</text>
<text x="244.5" y="880.9" font-size="11.5" fill="#222" text-anchor="middle" font-weight="normal">20</text>
<text x="324.25" y="880.9" font-size="11.5" fill="#222" text-anchor="middle" font-weight="normal">30</text>
<text x="404.0" y="880.9" font-size="11.5" fill="#222" text-anchor="middle" font-weight="normal">40</text>
<text x="483.75" y="880.9" font-size="11.5" fill="#222" text-anchor="middle" font-weight="normal">50</text>
<text x="563.5" y="880.9" font-size="11.5" fill="#222" text-anchor="middle" font-weight="normal">60</text>
<text x="643.25" y="880.9" font-size="11.5" fill="#222" text-anchor="middle" font-weight="normal">70</text>
<text x="723.0" y="880.9" font-size="11.5" fill="#222" text-anchor="middle" font-weight="normal">80</text>
<line x1="217.7" y1="665.5" x2="217.7" y2="866.5" stroke="#8fa88f" stroke-width="2"/>
<text x="217.2" y="655" font-size="10" fill="#1f5a22" text-anchor="start" font-weight="bold" textLength="23.4" lengthAdjust="spacingAndGlyphs">oligo</text>
<line x1="376.9" y1="665.5" x2="376.9" y2="866.5" stroke="#8fa88f" stroke-width="2"/>
<text x="376.4" y="655" font-size="10" fill="#1f5a22" text-anchor="start" font-weight="bold" textLength="23.5" lengthAdjust="spacingAndGlyphs">FCCP</text>
<line x1="536" y1="665.5" x2="536" y2="866.5" stroke="#8fa88f" stroke-width="2"/>
<text x="535.5" y="655" font-size="10" fill="#1f5a22" text-anchor="start" font-weight="bold" textLength="33.9" lengthAdjust="spacingAndGlyphs">Rot/AA</text>
<text x="373.8" y="600" font-size="19" fill="#3a3f44" text-anchor="start" font-weight="normal" textLength="44.5" lengthAdjust="spacingAndGlyphs">ECAR</text>
<text x="359" y="896" font-size="11" fill="#222" text-anchor="start" font-weight="normal" textLength="71.6" lengthAdjust="spacingAndGlyphs">Time (minutes)</text>
<text x="38" y="716.25" font-size="11" fill="#222" text-anchor="middle" transform="rotate(-90 38 716.25)" textLength="135.5" lengthAdjust="spacingAndGlyphs">ECAR (mpH/min/ug protein)</text>
<path d="M34.2 792.7 L39.2 797.7 L34.2 802.7 L29.200000000000003 797.7 Z" fill="#000"/>
<polyline points="94.7,779.3 147.1,790.3 200.7,791 253.7,675.9 306.3,689.4 359,689.7 413,726.7 465.2,712.9 518.7,714.6 571.9,694.9 624.7,707 677.6,707.7" fill="none" stroke="#3b4fb8" stroke-width="1.15"/>
<polyline points="94.7,847.5 147.1,852.2 200.7,852.2 253.7,833.7 306.3,840.6 359,844 413,829.2 465.2,826.1 518.7,826.1 571.9,829.2 624.7,833.7 677.6,833.7" fill="none" stroke="#a02424" stroke-width="1.15"/>
<polyline points="94.7,851.6 147.1,854.8 200.7,854.2 253.7,837.9 306.3,834.8 359,835.5 413,844 465.2,834.8 518.7,832 571.9,833.7 624.7,835.5 677.6,836.5" fill="none" stroke="#1f5f1f" stroke-width="1.15"/>
<polyline points="94.7,858.3 147.1,861 200.7,859.7 253.7,853.6 306.3,855.2 359,858.3 413,856.2 465.2,850.3 518.7,848.6 571.9,851 624.7,853.4 677.6,854.4" fill="none" stroke="#e8b54a" stroke-width="1.15"/>
<path d="M89.7 774.5 H99.7 M94.7 774.5 V783.7 M89.7 783.7 H99.7" stroke="#3848b0" stroke-width="2.2" fill="none"/>
<path d="M142.1 784.8 H152.1 M147.1 784.8 V795 M142.1 795 H152.1" stroke="#3848b0" stroke-width="2.2" fill="none"/>
<path d="M195.7 785 H205.7 M200.7 785 V796 M195.7 796 H205.7" stroke="#3848b0" stroke-width="2.2" fill="none"/>
<path d="M248.7 665.6 H258.7 M253.7 665.6 V686 M248.7 686 H258.7" stroke="#3848b0" stroke-width="2.2" fill="none"/>
<path d="M301.3 682.8 H311.3 M306.3 682.8 V694.9 M301.3 694.9 H311.3" stroke="#3848b0" stroke-width="2.2" fill="none"/>
<path d="M354 682.8 H364 M359 682.8 V696 M354 696 H364" stroke="#3848b0" stroke-width="2.2" fill="none"/>
<path d="M408 711.8 H418 M413 711.8 V741.5 M408 741.5 H418" stroke="#3848b0" stroke-width="2.2" fill="none"/>
<path d="M460.2 705 H470.2 M465.2 705 V720.8 M460.2 720.8 H470.2" stroke="#3848b0" stroke-width="2.2" fill="none"/>
<path d="M513.7 707.7 H523.7 M518.7 707.7 V721.5 M513.7 721.5 H523.7" stroke="#3848b0" stroke-width="2.2" fill="none"/>
<path d="M566.9 680.8 H576.9 M571.9 680.8 V708.7 M566.9 708.7 H576.9" stroke="#3848b0" stroke-width="2.2" fill="none"/>
<path d="M619.7 698.4 H629.7 M624.7 698.4 V717 M619.7 717 H629.7" stroke="#3848b0" stroke-width="2.2" fill="none"/>
<path d="M672.6 698.4 H682.6 M677.6 698.4 V717 M672.6 717 H682.6" stroke="#3848b0" stroke-width="2.2" fill="none"/>
<path d="M94.7 775.1999999999999 L98.8 779.3 L94.7 783.4 L90.60000000000001 779.3 Z" fill="#3d5ee8" stroke="#3d5ee8" stroke-width="0.8"/>
<path d="M147.1 786.1999999999999 L151.2 790.3 L147.1 794.4 L143.0 790.3 Z" fill="#3d5ee8" stroke="#3d5ee8" stroke-width="0.8"/>
<path d="M200.7 786.9 L204.79999999999998 791 L200.7 795.1 L196.6 791 Z" fill="#3d5ee8" stroke="#3d5ee8" stroke-width="0.8"/>
<path d="M253.7 671.8 L257.8 675.9 L253.7 680.0 L249.6 675.9 Z" fill="#3d5ee8" stroke="#3d5ee8" stroke-width="0.8"/>
<path d="M306.3 685.3 L310.40000000000003 689.4 L306.3 693.5 L302.2 689.4 Z" fill="#3d5ee8" stroke="#3d5ee8" stroke-width="0.8"/>
<path d="M359 685.6 L363.1 689.7 L359 693.8000000000001 L354.9 689.7 Z" fill="#3d5ee8" stroke="#3d5ee8" stroke-width="0.8"/>
<path d="M413 722.6 L417.1 726.7 L413 730.8000000000001 L408.9 726.7 Z" fill="#3d5ee8" stroke="#3d5ee8" stroke-width="0.8"/>
<path d="M465.2 708.8 L469.3 712.9 L465.2 717.0 L461.09999999999997 712.9 Z" fill="#3d5ee8" stroke="#3d5ee8" stroke-width="0.8"/>
<path d="M518.7 710.5 L522.8000000000001 714.6 L518.7 718.7 L514.6 714.6 Z" fill="#3d5ee8" stroke="#3d5ee8" stroke-width="0.8"/>
<path d="M571.9 690.8 L576.0 694.9 L571.9 699.0 L567.8 694.9 Z" fill="#3d5ee8" stroke="#3d5ee8" stroke-width="0.8"/>
<path d="M624.7 702.9 L628.8000000000001 707 L624.7 711.1 L620.6 707 Z" fill="#3d5ee8" stroke="#3d5ee8" stroke-width="0.8"/>
<path d="M677.6 703.6 L681.7 707.7 L677.6 711.8000000000001 L673.5 707.7 Z" fill="#3d5ee8" stroke="#3d5ee8" stroke-width="0.8"/>
<path d="M89.7 843 H99.7 M94.7 843 V852 M89.7 852 H99.7" stroke="#ac1a1a" stroke-width="2.2" fill="none"/>
<path d="M142.1 848 H152.1 M147.1 848 V856 M142.1 856 H152.1" stroke="#ac1a1a" stroke-width="2.2" fill="none"/>
<path d="M195.7 848 H205.7 M200.7 848 V856 M195.7 856 H205.7" stroke="#ac1a1a" stroke-width="2.2" fill="none"/>
<path d="M248.7 825 H258.7 M253.7 825 V843 M248.7 843 H258.7" stroke="#ac1a1a" stroke-width="2.2" fill="none"/>
<path d="M301.3 831 H311.3 M306.3 831 V850 M301.3 850 H311.3" stroke="#ac1a1a" stroke-width="2.2" fill="none"/>
<path d="M354 836 H364 M359 836 V852 M354 852 H364" stroke="#ac1a1a" stroke-width="2.2" fill="none"/>
<path d="M408 820 H418 M413 820 V838 M408 838 H418" stroke="#ac1a1a" stroke-width="2.2" fill="none"/>
<path d="M460.2 820 H470.2 M465.2 820 V832 M460.2 832 H470.2" stroke="#ac1a1a" stroke-width="2.2" fill="none"/>
<path d="M513.7 820 H523.7 M518.7 820 V832 M513.7 832 H523.7" stroke="#ac1a1a" stroke-width="2.2" fill="none"/>
<path d="M566.9 823 H576.9 M571.9 823 V836 M566.9 836 H576.9" stroke="#ac1a1a" stroke-width="2.2" fill="none"/>
<path d="M619.7 826 H629.7 M624.7 826 V840 M619.7 840 H629.7" stroke="#ac1a1a" stroke-width="2.2" fill="none"/>
<path d="M672.6 827 H682.6 M677.6 827 V840 M672.6 840 H682.6" stroke="#ac1a1a" stroke-width="2.2" fill="none"/>
<path d="M94.7 843.4 L98.8 847.5 L94.7 851.6 L90.60000000000001 847.5 Z" fill="#e4161c" stroke="#d4161c" stroke-width="0.8"/>
<path d="M147.1 848.1 L151.2 852.2 L147.1 856.3000000000001 L143.0 852.2 Z" fill="#e4161c" stroke="#d4161c" stroke-width="0.8"/>
<path d="M200.7 848.1 L204.79999999999998 852.2 L200.7 856.3000000000001 L196.6 852.2 Z" fill="#e4161c" stroke="#d4161c" stroke-width="0.8"/>
<path d="M253.7 829.6 L257.8 833.7 L253.7 837.8000000000001 L249.6 833.7 Z" fill="#e4161c" stroke="#d4161c" stroke-width="0.8"/>
<path d="M306.3 836.5 L310.40000000000003 840.6 L306.3 844.7 L302.2 840.6 Z" fill="#e4161c" stroke="#d4161c" stroke-width="0.8"/>
<path d="M359 839.9 L363.1 844 L359 848.1 L354.9 844 Z" fill="#e4161c" stroke="#d4161c" stroke-width="0.8"/>
<path d="M413 825.1 L417.1 829.2 L413 833.3000000000001 L408.9 829.2 Z" fill="#e4161c" stroke="#d4161c" stroke-width="0.8"/>
<path d="M465.2 822.0 L469.3 826.1 L465.2 830.2 L461.09999999999997 826.1 Z" fill="#e4161c" stroke="#d4161c" stroke-width="0.8"/>
<path d="M518.7 822.0 L522.8000000000001 826.1 L518.7 830.2 L514.6 826.1 Z" fill="#e4161c" stroke="#d4161c" stroke-width="0.8"/>
<path d="M571.9 825.1 L576.0 829.2 L571.9 833.3000000000001 L567.8 829.2 Z" fill="#e4161c" stroke="#d4161c" stroke-width="0.8"/>
<path d="M624.7 829.6 L628.8000000000001 833.7 L624.7 837.8000000000001 L620.6 833.7 Z" fill="#e4161c" stroke="#d4161c" stroke-width="0.8"/>
<path d="M677.6 829.6 L681.7 833.7 L677.6 837.8000000000001 L673.5 833.7 Z" fill="#e4161c" stroke="#d4161c" stroke-width="0.8"/>
<path d="M89.7 846 H99.7 M94.7 846 V857 M89.7 857 H99.7" stroke="#1a5e1a" stroke-width="2.2" fill="none"/>
<path d="M142.1 850 H152.1 M147.1 850 V859 M142.1 859 H152.1" stroke="#1a5e1a" stroke-width="2.2" fill="none"/>
<path d="M195.7 849 H205.7 M200.7 849 V859 M195.7 859 H205.7" stroke="#1a5e1a" stroke-width="2.2" fill="none"/>
<path d="M248.7 818.8 H258.7 M253.7 818.8 V857 M248.7 857 H258.7" stroke="#1a5e1a" stroke-width="2.2" fill="none"/>
<path d="M301.3 818.8 H311.3 M306.3 818.8 V855 M301.3 855 H311.3" stroke="#1a5e1a" stroke-width="2.2" fill="none"/>
<path d="M354 819.8 H364 M359 819.8 V852 M354 852 H364" stroke="#1a5e1a" stroke-width="2.2" fill="none"/>
<path d="M408 829 H418 M413 829 V848 M408 848 H418" stroke="#1a5e1a" stroke-width="2.2" fill="none"/>
<path d="M460.2 820 H470.2 M465.2 820 V848 M460.2 848 H470.2" stroke="#1a5e1a" stroke-width="2.2" fill="none"/>
<path d="M513.7 819 H523.7 M518.7 819 V849 M513.7 849 H523.7" stroke="#1a5e1a" stroke-width="2.2" fill="none"/>
<path d="M566.9 814.7 H576.9 M571.9 814.7 V852 M566.9 852 H576.9" stroke="#1a5e1a" stroke-width="2.2" fill="none"/>
<path d="M619.7 821 H629.7 M624.7 821 V850 M619.7 850 H629.7" stroke="#1a5e1a" stroke-width="2.2" fill="none"/>
<path d="M672.6 822.7 H682.6 M677.6 822.7 V850 M672.6 850 H682.6" stroke="#1a5e1a" stroke-width="2.2" fill="none"/>
<path d="M94.7 847.5 L98.8 851.6 L94.7 855.7 L90.60000000000001 851.6 Z" fill="#1f7a1f" stroke="#1f6a1f" stroke-width="0.8"/>
<path d="M147.1 850.6999999999999 L151.2 854.8 L147.1 858.9 L143.0 854.8 Z" fill="#1f7a1f" stroke="#1f6a1f" stroke-width="0.8"/>
<path d="M200.7 850.1 L204.79999999999998 854.2 L200.7 858.3000000000001 L196.6 854.2 Z" fill="#1f7a1f" stroke="#1f6a1f" stroke-width="0.8"/>
<path d="M253.7 833.8 L257.8 837.9 L253.7 842.0 L249.6 837.9 Z" fill="#1f7a1f" stroke="#1f6a1f" stroke-width="0.8"/>
<path d="M306.3 830.6999999999999 L310.40000000000003 834.8 L306.3 838.9 L302.2 834.8 Z" fill="#1f7a1f" stroke="#1f6a1f" stroke-width="0.8"/>
<path d="M359 831.4 L363.1 835.5 L359 839.6 L354.9 835.5 Z" fill="#1f7a1f" stroke="#1f6a1f" stroke-width="0.8"/>
<path d="M413 839.9 L417.1 844 L413 848.1 L408.9 844 Z" fill="#1f7a1f" stroke="#1f6a1f" stroke-width="0.8"/>
<path d="M465.2 830.6999999999999 L469.3 834.8 L465.2 838.9 L461.09999999999997 834.8 Z" fill="#1f7a1f" stroke="#1f6a1f" stroke-width="0.8"/>
<path d="M518.7 827.9 L522.8000000000001 832 L518.7 836.1 L514.6 832 Z" fill="#1f7a1f" stroke="#1f6a1f" stroke-width="0.8"/>
<path d="M571.9 829.6 L576.0 833.7 L571.9 837.8000000000001 L567.8 833.7 Z" fill="#1f7a1f" stroke="#1f6a1f" stroke-width="0.8"/>
<path d="M624.7 831.4 L628.8000000000001 835.5 L624.7 839.6 L620.6 835.5 Z" fill="#1f7a1f" stroke="#1f6a1f" stroke-width="0.8"/>
<path d="M677.6 832.4 L681.7 836.5 L677.6 840.6 L673.5 836.5 Z" fill="#1f7a1f" stroke="#1f6a1f" stroke-width="0.8"/>
<path d="M89.7 853 H99.7 M94.7 853 V863 M89.7 863 H99.7" stroke="#e8a928" stroke-width="2.2" fill="none"/>
<path d="M142.1 856 H152.1 M147.1 856 V866 M142.1 866 H152.1" stroke="#e8a928" stroke-width="2.2" fill="none"/>
<path d="M195.7 855 H205.7 M200.7 855 V865 M195.7 865 H205.7" stroke="#e8a928" stroke-width="2.2" fill="none"/>
<path d="M248.7 845 H258.7 M253.7 845 V862 M248.7 862 H258.7" stroke="#e8a928" stroke-width="2.2" fill="none"/>
<path d="M301.3 848 H311.3 M306.3 848 V862 M301.3 862 H311.3" stroke="#e8a928" stroke-width="2.2" fill="none"/>
<path d="M354 850 H364 M359 850 V866 M354 866 H364" stroke="#e8a928" stroke-width="2.2" fill="none"/>
<path d="M408 848 H418 M413 848 V864 M408 864 H418" stroke="#e8a928" stroke-width="2.2" fill="none"/>
<path d="M460.2 845 H470.2 M465.2 845 V856 M460.2 856 H470.2" stroke="#e8a928" stroke-width="2.2" fill="none"/>
<path d="M513.7 843 H523.7 M518.7 843 V853 M513.7 853 H523.7" stroke="#e8a928" stroke-width="2.2" fill="none"/>
<path d="M566.9 845 H576.9 M571.9 845 V857 M566.9 857 H576.9" stroke="#e8a928" stroke-width="2.2" fill="none"/>
<path d="M619.7 848 H629.7 M624.7 848 V859 M619.7 859 H629.7" stroke="#e8a928" stroke-width="2.2" fill="none"/>
<path d="M672.6 847 H682.6 M677.6 847 V861 M672.6 861 H682.6" stroke="#e8a928" stroke-width="2.2" fill="none"/>
<path d="M94.7 854.1999999999999 L98.8 858.3 L94.7 862.4 L90.60000000000001 858.3 Z" fill="#e8b030" stroke="#6a5010" stroke-width="0.8"/>
<path d="M147.1 856.9 L151.2 861 L147.1 865.1 L143.0 861 Z" fill="#e8b030" stroke="#6a5010" stroke-width="0.8"/>
<path d="M200.7 855.6 L204.79999999999998 859.7 L200.7 863.8000000000001 L196.6 859.7 Z" fill="#e8b030" stroke="#6a5010" stroke-width="0.8"/>
<path d="M253.7 849.5 L257.8 853.6 L253.7 857.7 L249.6 853.6 Z" fill="#e8b030" stroke="#6a5010" stroke-width="0.8"/>
<path d="M306.3 851.1 L310.40000000000003 855.2 L306.3 859.3000000000001 L302.2 855.2 Z" fill="#e8b030" stroke="#6a5010" stroke-width="0.8"/>
<path d="M359 854.1999999999999 L363.1 858.3 L359 862.4 L354.9 858.3 Z" fill="#e8b030" stroke="#6a5010" stroke-width="0.8"/>
<path d="M413 852.1 L417.1 856.2 L413 860.3000000000001 L408.9 856.2 Z" fill="#e8b030" stroke="#6a5010" stroke-width="0.8"/>
<path d="M465.2 846.1999999999999 L469.3 850.3 L465.2 854.4 L461.09999999999997 850.3 Z" fill="#e8b030" stroke="#6a5010" stroke-width="0.8"/>
<path d="M518.7 844.5 L522.8000000000001 848.6 L518.7 852.7 L514.6 848.6 Z" fill="#e8b030" stroke="#6a5010" stroke-width="0.8"/>
<path d="M571.9 846.9 L576.0 851 L571.9 855.1 L567.8 851 Z" fill="#e8b030" stroke="#6a5010" stroke-width="0.8"/>
<path d="M624.7 849.3 L628.8000000000001 853.4 L624.7 857.5 L620.6 853.4 Z" fill="#e8b030" stroke="#6a5010" stroke-width="0.8"/>
<path d="M677.6 850.3 L681.7 854.4 L677.6 858.5 L673.5 854.4 Z" fill="#e8b030" stroke="#6a5010" stroke-width="0.8"/>
<line x1="857.2" y1="285.4" x2="857.2" y2="515.0" stroke="#a6a6a6" stroke-width="1.6"/>
<line x1="857.2" y1="514.5" x2="1495" y2="514.5" stroke="#a6a6a6" stroke-width="1.6"/>
<line x1="852.2" y1="285.4" x2="857.2" y2="285.4" stroke="#a6a6a6" stroke-width="1"/>
<text x="824.2" y="289.7" font-size="11.5" fill="#222" text-anchor="start" font-weight="normal">150</text>
<line x1="852.2" y1="342.7" x2="857.2" y2="342.7" stroke="#a6a6a6" stroke-width="1"/>
<text x="824.2" y="347.0" font-size="11.5" fill="#222" text-anchor="start" font-weight="normal">112.5</text>
<line x1="852.2" y1="400" x2="857.2" y2="400" stroke="#a6a6a6" stroke-width="1"/>
<text x="824.2" y="404.3" font-size="11.5" fill="#222" text-anchor="start" font-weight="normal">75</text>
<line x1="852.2" y1="457.2" x2="857.2" y2="457.2" stroke="#a6a6a6" stroke-width="1"/>
<text x="824.2" y="461.5" font-size="11.5" fill="#222" text-anchor="start" font-weight="normal">37.5</text>
<line x1="852.2" y1="514.5" x2="857.2" y2="514.5" stroke="#a6a6a6" stroke-width="1"/>
<text x="824.2" y="518.8" font-size="11.5" fill="#222" text-anchor="start" font-weight="normal">0</text>
<text x="857.0" y="528" font-size="11.5" fill="#222" text-anchor="middle" font-weight="normal">0</text>
<text x="948.3" y="528" font-size="11.5" fill="#222" text-anchor="middle" font-weight="normal">10</text>
<text x="1039.6" y="528" font-size="11.5" fill="#222" text-anchor="middle" font-weight="normal">20</text>
<text x="1130.9" y="528" font-size="11.5" fill="#222" text-anchor="middle" font-weight="normal">30</text>
<text x="1222.2" y="528" font-size="11.5" fill="#222" text-anchor="middle" font-weight="normal">40</text>
<text x="1313.5" y="528" font-size="11.5" fill="#222" text-anchor="middle" font-weight="normal">50</text>
<text x="1404.8" y="528" font-size="11.5" fill="#222" text-anchor="middle" font-weight="normal">60</text>
<text x="1496.1" y="528" font-size="11.5" fill="#222" text-anchor="middle" font-weight="normal">70</text>
<text x="1115" y="247.5" font-size="19" fill="#3a3f44" text-anchor="start" font-weight="normal" textLength="106.4" lengthAdjust="spacingAndGlyphs">Energy Map</text>
<text x="1097.7" y="546.8" font-size="11" fill="#222" text-anchor="start" font-weight="normal" textLength="137.3" lengthAdjust="spacingAndGlyphs">ECAR (mpH/min/ug protein)</text>
<text x="812.6" y="389.3" font-size="11" fill="#222" text-anchor="middle" transform="rotate(-90 812.6 389.3)" textLength="133.0" lengthAdjust="spacingAndGlyphs">OCR (pmol/min/ug protein)</text>
<path d="M808.2 460.7 L813.2 465.7 L808.2 470.7 L803.2 465.7 Z" fill="#000"/>
<rect x="885.5" y="286.5" width="3" height="13" fill="#ececec"/>
<rect x="938.8" y="286.5" width="3" height="13" fill="#ececec"/>
<rect x="885.5" y="489.5" width="3" height="13" fill="#ececec"/>
<rect x="954.5" y="489.5" width="3" height="13" fill="#ececec"/>
<rect x="1424.5" y="286.5" width="3" height="13" fill="#ececec"/>
<rect x="1489.5" y="286.5" width="3" height="13" fill="#ececec"/>
<rect x="1423.5" y="489.5" width="3" height="13" fill="#ececec"/>
<rect x="1489.5" y="489.5" width="3" height="13" fill="#ececec"/>
<text x="892" y="299" font-size="12.5" fill="#3a3f44" text-anchor="start" font-weight="normal" textLength="44" lengthAdjust="spacingAndGlyphs">Aerobic</text>
<text x="892" y="502" font-size="12.5" fill="#3a3f44" text-anchor="start" font-weight="normal" textLength="58.8" lengthAdjust="spacingAndGlyphs">Quiescent</text>
<text x="1430.7" y="299" font-size="12.5" fill="#3a3f44" text-anchor="start" font-weight="normal" textLength="55.9" lengthAdjust="spacingAndGlyphs">Energetic</text>
<text x="1429.6" y="502" font-size="12.5" fill="#3a3f44" text-anchor="start" font-weight="normal" textLength="57" lengthAdjust="spacingAndGlyphs">Glycolytic</text>
<path d="M894.7 490.7 H943.5 M894.7 485.7 V495.7 M943.5 485.7 V495.7 M918.5 484.4 V493.6 M913.5 484.4 H923.5 M913.5 493.6 H923.5" stroke="#e8a928" stroke-width="2.2" fill="none"/>
<path d="M918.5 486.5 L922.7 490.7 L918.5 494.9 L914.3 490.7 Z" fill="#e8b030" stroke="#6a5010" stroke-width="0.8"/>
<path d="M912.3 470.8 H994.5 M912.3 465.8 V475.8 M994.5 465.8 V475.8 M954.2 458 V483.7 M949.2 458 H959.2 M949.2 483.7 H959.2" stroke="#1a5e1a" stroke-width="2.2" fill="none"/>
<path d="M954.2 467.3 L957.7 470.8 L954.2 474.3 L950.7 470.8 Z" fill="#1f7a1f" stroke="#1f6a1f" stroke-width="0.8"/>
<path d="M957.1 457.6 H1003 M957.1 452.6 V462.6 M1003 452.6 V462.6 M979.1 449.5 V466 M974.1 449.5 H984.1 M974.1 466 H984.1" stroke="#ac1a1a" stroke-width="2.2" fill="none"/>
<path d="M979.1 454.1 L982.6 457.6 L979.1 461.1 L975.6 457.6 Z" fill="#e4161c" stroke="#d4161c" stroke-width="0.8"/>
<path d="M1363.5 319.9 H1408.7 M1363.5 314.9 V324.9 M1408.7 314.9 V324.9 M1386.7 307 V333.1 M1381.7 307 H1391.7 M1381.7 333.1 H1391.7" stroke="#3848b0" stroke-width="2.2" fill="none"/>
<path d="M1386.7 316.4 L1390.2 319.9 L1386.7 323.4 L1383.2 319.9 Z" fill="#3d5ee8" stroke="#3d5ee8" stroke-width="0.8"/>
<text x="797.5" y="600" font-size="19" fill="#3a3f44" text-anchor="start" font-weight="normal" textLength="89.7" lengthAdjust="spacingAndGlyphs">Group List</text>
<text x="1418.9" y="595.7" font-size="12.5" fill="#444a50" text-anchor="start" font-weight="normal" textLength="37.6" lengthAdjust="spacingAndGlyphs">Details</text>
<rect x="1467.5" y="579.5" width="24" height="24" fill="#fff" stroke="#b8bcc0" stroke-width="1"/>
<rect x="798" y="614" width="20" height="20" fill="#3f5cff"/>
<text x="823.7" y="629.1" font-size="12.5" fill="#222" text-anchor="start" font-weight="normal" textLength="93.5" lengthAdjust="spacingAndGlyphs">Mito-MCF10A Par</text>
<rect x="998.2" y="614" width="20" height="20" fill="#ffa500"/>
<text x="1023.9000000000001" y="629.1" font-size="12.5" fill="#222" text-anchor="start" font-weight="normal" textLength="110.3" lengthAdjust="spacingAndGlyphs">Mito-MCF10A H1047</text>
<rect x="1198.2" y="614" width="20" height="20" fill="#ff0000"/>
<text x="1223.9" y="629.1" font-size="12.5" fill="#222" text-anchor="start" font-weight="normal" textLength="131.4" lengthAdjust="spacingAndGlyphs">Mito-MCF10A Par no egf</text>
<rect x="798" y="644" width="20" height="20" fill="#008000"/>
<text x="823.7" y="659.1" font-size="12.5" fill="#222" text-anchor="start" font-weight="normal" textLength="102.2" lengthAdjust="spacingAndGlyphs">Mito-MCF10A E545</text>
</svg>
</body></html>
